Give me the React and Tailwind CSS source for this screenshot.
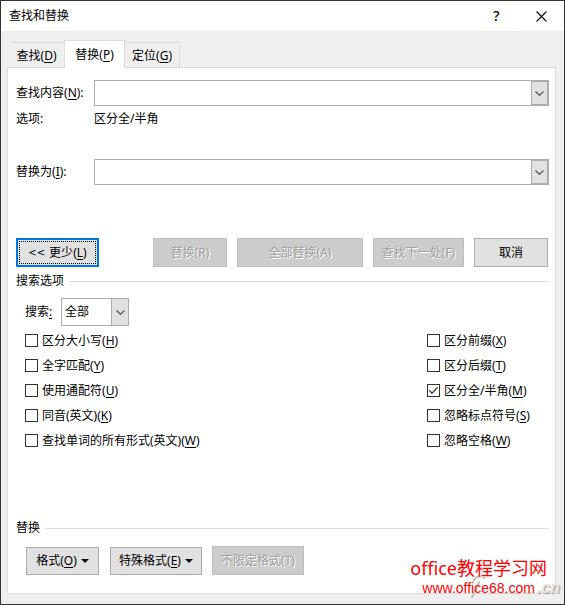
import { useState } from "react";
import clsx from "clsx";

const TABS = [
  { id: "find", text: "查找", hotkey: "D" },
  { id: "replace", text: "替换", hotkey: "P" },
  { id: "goto", text: "定位", hotkey: "G" },
];

const LEFT_OPTIONS = [
  { id: "matchCase", text: "区分大小写", hotkey: "H" },
  { id: "wholeWords", text: "全字匹配", hotkey: "Y" },
  { id: "wildcards", text: "使用通配符", hotkey: "U" },
  { id: "soundsLike", text: "同音(英文)", hotkey: "K" },
  { id: "wordForms", text: "查找单词的所有形式(英文)", hotkey: "W" },
];

const RIGHT_OPTIONS = [
  { id: "prefix", text: "区分前缀", hotkey: "X" },
  { id: "suffix", text: "区分后缀", hotkey: "T" },
  { id: "fullHalf", text: "区分全/半角", hotkey: "M" },
  { id: "punctuation", text: "忽略标点符号", hotkey: "S" },
  { id: "whitespace", text: "忽略空格", hotkey: "W" },
];

function Hotkey({ text, hotkey }) {
  return (
    <span className="whitespace-nowrap">
      {text}(<span className="underline underline-offset-2">{hotkey}</span>)
    </span>
  );
}

function Chevron() {
  return (
    <svg width="9" height="5" viewBox="0 0 9 5" fill="none" stroke="#555" strokeWidth="1.2" aria-hidden="true">
      <path d="M0.5 0.5 L4.5 4.3 L8.5 0.5" />
    </svg>
  );
}

function ComboRow({ id, text, hotkey }) {
  return (
    <div className="flex items-center">
      <label htmlFor={id} className="w-[78px] shrink-0">
        <Hotkey text={text} hotkey={hotkey} />:
      </label>
      <div className="flex h-[26px] min-w-0 flex-1 border border-[#abadb3]">
        <input id={id} type="text" className="min-w-0 flex-1 bg-white px-1 outline-none" />
        <button
          type="button"
          aria-label={text}
          className="flex w-[17px] items-center justify-center border border-[#abadb3] bg-[#e1e1e1]"
        >
          <Chevron />
        </button>
      </div>
    </div>
  );
}

function Button({ className, disabled, children }) {
  return (
    <button
      type="button"
      disabled={disabled}
      className={clsx(
        "flex items-center justify-center border",
        disabled
          ? "border-[#bfbfbf] bg-[#cccccc] text-[#a0a0a0] [text-shadow:1px_1px_0_#fff]"
          : "border-[#adadad] bg-[#e1e1e1]",
        className
      )}
    >
      {children}
    </button>
  );
}

function SectionTitle({ children }) {
  return (
    <div className="flex h-5 items-center gap-[5px]">
      <h2>{children}</h2>
      <div className="h-px flex-1 bg-[#dcdcdc]" />
    </div>
  );
}

function Option({ option, checked, onChange }) {
  return (
    <label className="flex h-[25px] items-center gap-1">
      <span className="relative flex h-[13px] w-[13px]">
        <input
          type="checkbox"
          checked={checked}
          onChange={onChange}
          className="h-[13px] w-[13px] appearance-none border border-[#333] bg-white"
        />
        {checked ? (
          <svg className="pointer-events-none absolute inset-0" width="13" height="13" viewBox="0 0 13 13" fill="none" stroke="#444" strokeWidth="1.3" aria-hidden="true">
            <path d="M2.3 6.3 L5 9.2 L10.7 3.3" />
          </svg>
        ) : null}
      </span>
      <Hotkey text={option.text} hotkey={option.hotkey} />
    </label>
  );
}

function DownArrow() {
  return (
    <svg width="8" height="4" viewBox="0 0 8 4" fill="#000" aria-hidden="true">
      <path d="M0 0 H8 L4 4 Z" />
    </svg>
  );
}

export default function App() {
  const [tab, setTab] = useState("replace");
  const [checked, setChecked] = useState({ fullHalf: true });

  function toggle(id) {
    setChecked((prev) => ({ ...prev, [id]: !prev[id] }));
  }

  function renderOption(o) {
    return <Option key={o.id} option={o} checked={Boolean(checked[o.id])} onChange={() => toggle(o.id)} />;
  }

  return (
    <div className="relative min-h-screen border border-[#333] bg-[#efefef] pb-2.5 font-['Noto_Sans','Noto_Sans_CJK_SC',sans-serif] text-[12px] leading-4 text-black">
      <header className="flex h-[30px] items-center bg-white pl-2">
        <h1 className="flex-1">查找和替换</h1>
        <button type="button" aria-label="帮助" className="w-[45px] text-[14px] font-medium">
          ?
        </button>
        <button type="button" aria-label="关闭" className="flex w-[45px] justify-center">
          <svg width="11" height="11" viewBox="0 0 11 11" stroke="#000" strokeWidth="1.1" aria-hidden="true">
            <path d="M0.5 0.5 L10.5 10.5 M10.5 0.5 L0.5 10.5" />
          </svg>
        </button>
      </header>

      <div role="tablist" className="flex items-end pt-[9px] pl-2">
        {TABS.map((t) => (
          <button
            key={t.id}
            type="button"
            role="tab"
            aria-selected={tab === t.id}
            onClick={() => setTab(t.id)}
            className={clsx(
              "border-t border-[#dcdcdc]",
              tab === t.id ? "z-10 -mb-px h-[28px] w-[61px] border-x bg-white" : "h-[25px] w-[55px] pt-0.5",
              t.id === "goto" && tab !== "goto" && "border-r"
            )}
          >
            <Hotkey text={t.text} hotkey={t.hotkey} />
          </button>
        ))}
      </div>

      <main className="mr-2 ml-1.5 border border-[#dcdcdc] bg-white pt-3 pr-1.5 pb-[18px] pl-2">
        <ComboRow id="find-what" text="查找内容" hotkey="N" />
        <div className="flex pt-[5px] pb-8">
          <span className="w-[78px]">选项:</span>
          <span>区分全/半角</span>
        </div>
        <ComboRow id="replace-with" text="替换为" hotkey="I" />

        <div className="mt-[53px] flex gap-2.5 pr-px">
          <button type="button" className="mr-auto flex h-[29px] w-[83px] border-2 border-[#0078d7] bg-[#e1e1e1] p-px">
            <span className="flex h-full w-full items-center justify-center gap-1 border border-dotted border-black">
              <span className="font-['DejaVu_Sans',sans-serif] text-[10px]">{"<<"}</span>
              <Hotkey text="更少" hotkey="L" />
            </span>
          </button>
          <Button disabled className="h-[29px] w-[74px]">
            替换(R)
          </Button>
          <Button disabled className="h-[29px] w-[126px]">
            全部替换(A)
          </Button>
          <Button disabled className="h-[29px] w-[91px]">
            查找下一处(F)
          </Button>
          <Button className="h-[29px] w-[74px]">取消</Button>
        </div>

        <div className="pt-1">
          <SectionTitle>搜索选项</SectionTitle>
        </div>
        <div className="mt-[7px] flex items-center pl-[9px]">
          <label htmlFor="direction" className="w-9">
            搜索<span className="underline underline-offset-2">:</span>
          </label>
          <div className="relative">
            <select id="direction" className="h-7 w-[68px] appearance-none border border-[#abadb3] bg-white pl-[3px] outline-none">
              <option>全部</option>
              <option>向上</option>
              <option>向下</option>
            </select>
            <span className="pointer-events-none absolute inset-y-0 right-0 flex w-[18px] items-center justify-center border border-[#abadb3] bg-[#e1e1e1]">
              <Chevron />
            </span>
          </div>
        </div>

        <div className="mt-0.5 flex justify-between pl-[9px]">
          <div>{LEFT_OPTIONS.map(renderOption)}</div>
          <div className="w-[122px]">{RIGHT_OPTIONS.map(renderOption)}</div>
        </div>

        <div className="pt-[65px]">
          <SectionTitle>替换</SectionTitle>
        </div>
        <div className="mt-2 flex items-end pl-2.5">
          <Button className="mr-[11px] h-7 w-[73px] gap-1">
            <Hotkey text="格式" hotkey="O" />
            <DownArrow />
          </Button>
          <Button className="mr-2.5 h-7 w-[92px] gap-1">
            <Hotkey text="特殊格式" hotkey="E" />
            <DownArrow />
          </Button>
          <Button disabled className="h-[29px] w-[92px]">
            不限定格式(T)
          </Button>
        </div>
      </main>

      <div className="absolute right-1 bottom-1 z-10 flex items-end">
        <svg className="h-[26px] w-[66px]" viewBox="0 0 66 26" fill="none" strokeLinecap="round" aria-hidden="true">
          <g stroke="#b8b8b8" strokeWidth="2">
            <path d="M3 6 C5 2 10 1 13 4 M8 8 L1 23" />
            <path d="M19 19 H25 M31 19 H37 M43 19 H49 M56 19 H60" strokeWidth="1" />
          </g>
          <path d="M2 5 C4 1 9 0 12 3 M7 7 L0 22" stroke="#eeeeee" strokeWidth="1.5" />
        </svg>
        <span className="font-['Liberation_Sans',sans-serif] text-[16px] leading-6 font-bold text-[#e6e6e6] italic [text-shadow:1px_1px_1px_#999]">
          .cn
        </span>
      </div>
      <div className="absolute right-[17px] bottom-2 z-20 flex flex-col items-center text-[#ff0000]">
        <span className="text-[18px] leading-6">office教程学习网</span>
        <a href="#" className="font-['Liberation_Sans',sans-serif] text-[14px] leading-4">
          www.office68.com
        </a>
      </div>
    </div>
  );
}
